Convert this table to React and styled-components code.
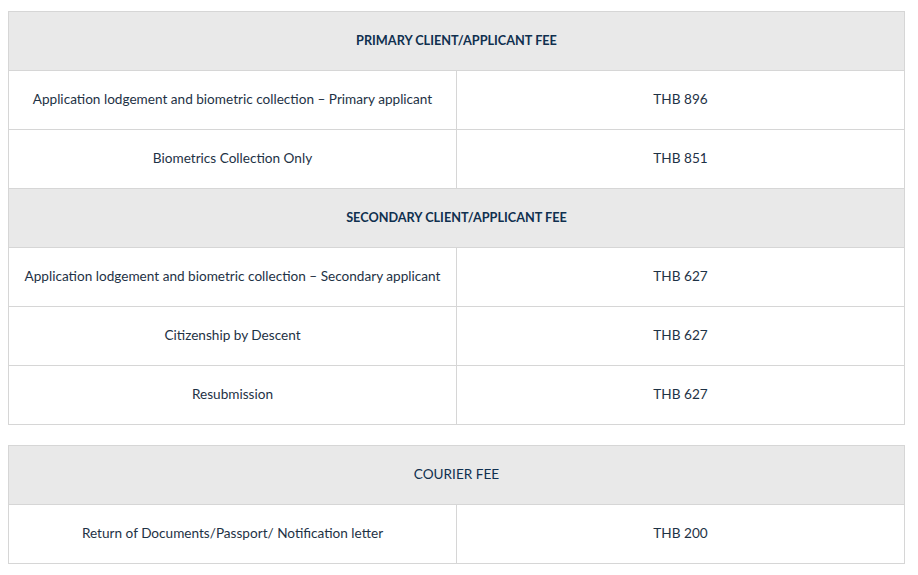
import React from "react";
import styled, { createGlobalStyle } from "styled-components";

const GlobalStyle = createGlobalStyle`
  body {
    margin: 0;
    padding: 11px 8px;
    background: #ffffff;
    font-family: Lato, "Liberation Sans", sans-serif;
  }
`;

const FeeTable = styled.table`
  width: 897px;
  border-collapse: collapse;
  table-layout: fixed;
  margin-bottom: 20px;
  font-size: 13.6px;
  color: #1e3245;
`;

const HeadCell = styled.th`
  height: 56px;
  padding: 0 0 2px;
  background-color: #e9e9e9;
  border: 1px solid #d6d6d6;
  font-weight: ${(p) => (p.$plain ? 400 : 700)};
  font-size: ${(p) => (p.$plain ? "13.6px" : "12.7px")};
  color: #10304f;
  text-align: center;
  vertical-align: middle;
`;

const Cell = styled.td`
  height: 56px;
  padding: 0 10px 2px;
  border: 1px solid #d6d6d6;
  font-weight: 400;
  text-align: center;
  vertical-align: middle;
  width: 50%;
`;

const sections = [
  [
    {
      title: "PRIMARY CLIENT/APPLICANT FEE",
      rows: [
        ["Application lodgement and biometric collection – Primary applicant", "THB 896"],
        ["Biometrics Collection Only", "THB 851"],
      ],
    },
    {
      title: "SECONDARY CLIENT/APPLICANT FEE",
      rows: [
        ["Application lodgement and biometric collection – Secondary applicant", "THB 627"],
        ["Citizenship by Descent", "THB 627"],
        ["Resubmission", "THB 627"],
      ],
    },
  ],
  [
    {
      title: "COURIER FEE",
      plain: true,
      rows: [["Return of Documents/Passport/ Notification letter", "THB 200"]],
    },
  ],
];

const App = () => (
  <>
    <GlobalStyle />
    {sections.map((groups, t) => (
      <FeeTable key={t}>
        <tbody>
          {groups.map((group) => (
            <React.Fragment key={group.title}>
              <tr>
                <HeadCell colSpan={2} $plain={group.plain}>
                  {group.title}
                </HeadCell>
              </tr>
              {group.rows.map(([label, price]) => (
                <tr key={label}>
                  <Cell>{label}</Cell>
                  <Cell>{price}</Cell>
                </tr>
              ))}
            </React.Fragment>
          ))}
        </tbody>
      </FeeTable>
    ))}
  </>
);

export default App;
